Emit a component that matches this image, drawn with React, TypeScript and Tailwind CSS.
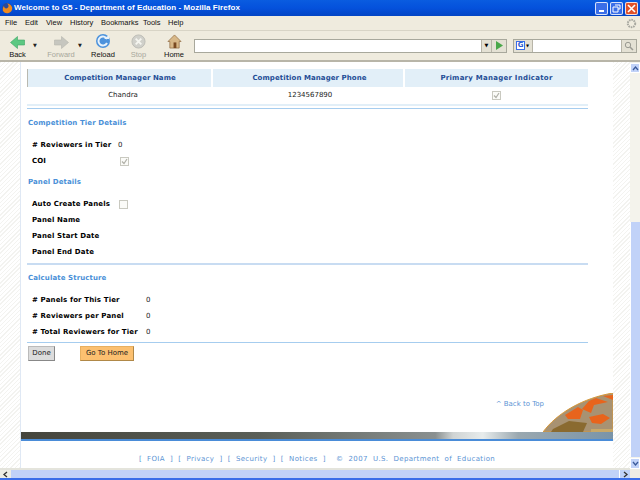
import React from "react";

const font = { fontFamily: '"DejaVu Sans", Verdana, sans-serif' };
const ui = { fontFamily: '"Liberation Sans", Arial, sans-serif' };
const hatch = "bg-[repeating-linear-gradient(135deg,#f3f3f0_0px,#f3f3f0_1px,#ffffff_1px,#ffffff_3px)]";

function ToolBtn({ label, disabled, children, w }: { label: string; disabled?: boolean; children: React.ReactNode; w: string }) {
  return (
    <div className={`flex flex-col items-center ${w}`}>
      <div className="h-[18px] flex items-center">{children}</div>
      <span className={`text-[7.5px] leading-[9px] ${disabled ? "text-[#a8a89c]" : "text-[#111]"}`} style={ui}>{label}</span>
    </div>
  );
}

function Check({ on }: { on: boolean }) {
  return (
    <span className="w-[9px] h-[9px] shrink-0 border border-[#c9c9c0] bg-[#fbfbf8] flex items-center justify-center">
      {on && (
        <svg width="7" height="7" viewBox="0 0 7 7">
          <path d="M1 3.500 L3 5.500 L6 1" stroke="#b0b0a8" strokeWidth="1.200" fill="none" />
        </svg>
      )}
    </span>
  );
}

function Field({ label, value, w, cb }: { label: string; value?: string; w: string; cb?: "on" | "off" }) {
  return (
    <div className="flex items-center h-[16px]">
      <span className={`font-bold text-[7px] tracking-[0.14px] whitespace-nowrap text-black shrink-0 ${w}`}>{label}</span>
      {value && <span className="text-[7px] text-[#222]">{value}</span>}
      {cb && <Check on={cb === "on"} />}
    </div>
  );
}

function Heading({ children, mt }: { children: React.ReactNode; mt: string }) {
  return <div className={`h-[14px] ml-[1px] flex items-center font-bold text-[7px] tracking-[0.1px] text-[#4a90d8] ${mt}`}>{children}</div>;
}

export default function App() {
  return (
    <div className="w-[640px] h-[480px] flex flex-col overflow-hidden bg-white" style={font}>
      {/* title bar */}
      <div className="h-[16px] shrink-0 flex items-center bg-gradient-to-b from-[#0a5ce0] via-[#0551dc] to-[#0344c4] pl-[1px] pr-[2px]">
        <svg width="12" height="12" viewBox="0 0 12 12" className="shrink-0">
          <circle cx="6" cy="6" r="5" fill="#2a4a9a" />
          <path d="M2 9 A5 5 0 0 0 11 5 C10 3 8 1.500 6 1.500 C8 3 8 5 6.500 6 C5 7 3 6 3 4 C2 5 1.500 7 2 9Z" fill="#ee8a1e" />
        </svg>
        <span className="ml-[1px] text-white font-bold text-[8px] tracking-[0.06px] whitespace-nowrap" style={ui}>Welcome to G5 - Department of Education - Mozilla Firefox</span>
        <div className="ml-auto flex gap-[2px]">
          <div className="w-[13px] h-[13px] rounded-[2px] border border-white/80 bg-[#3a6ee8] flex items-end justify-center pb-[2px]">
            <div className="w-[5px] h-[2px] bg-white" />
          </div>
          <div className="w-[13px] h-[13px] rounded-[2px] border border-white/80 bg-[#3a6ee8] flex items-center justify-center">
            <svg width="9" height="9" viewBox="0 0 9 9">
              <path d="M3 1h5v4H6M1 3h5v5H1z" stroke="#fff" fill="none" />
            </svg>
          </div>
          <div className="w-[13px] h-[13px] rounded-[2px] border border-white/80 bg-[#e0512a] flex items-center justify-center">
            <svg width="9" height="9" viewBox="0 0 9 9">
              <path d="M1 1l7 7M8 1l-7 7" stroke="#fff" strokeWidth="1.600" />
            </svg>
          </div>
        </div>
      </div>
      {/* menu bar */}
      <div className="h-[15px] shrink-0 flex items-center bg-[#efebde] border-b border-[#d8d4c6] pl-[5px] text-[7.5px] text-[#111]" style={ui}>
        <span className="w-[20px]">File</span>
        <span className="w-[21px]">Edit</span>
        <span className="w-[24px]">View</span>
        <span className="w-[31px]">History</span>
        <span className="w-[42px]">Bookmarks</span>
        <span className="w-[25px]">Tools</span>
        <span>Help</span>
        <svg width="11" height="11" viewBox="0 0 11 11" className="ml-auto mr-[3px]">
          <circle cx="5.500" cy="5.500" r="3.700" fill="none" stroke="#a8a8a0" strokeWidth="2" strokeDasharray="1.600 0.800" />
        </svg>
      </div>
      {/* toolbar */}
      <div className="h-[31px] shrink-0 flex items-center bg-[#efebde] border-b-2 border-[#b8b5a8] pl-[5px] pr-[3px]">
        <ToolBtn label="Back" w="w-[25px]">
          <svg width="15" height="13" viewBox="0 0 15 13" className="mt-[2px]"><path d="M0.500 6.500l7-6v3.500h7v5h-7v3.500z" fill="#5cc882" stroke="#3da565" strokeWidth="0.600" /></svg>
        </ToolBtn>
        <span className="text-[5px] w-[17px] text-[#222] pl-[3px]">▼</span>
        <ToolBtn label="Forward" disabled w="w-[28px]">
          <svg width="15" height="13" viewBox="0 0 15 13" className="mt-[2px]"><path d="M14.500 6.500l-7-6v3.500h-7v5h7v3.500z" fill="#c6c6bf" stroke="#b5b5ad" strokeWidth="0.600" /></svg>
        </ToolBtn>
        <span className="text-[5px] w-[13px] text-[#222] pl-[3px]">▼</span>
        <ToolBtn label="Reload" w="w-[30px]">
          <svg width="16" height="16" viewBox="0 0 16 16"><circle cx="8" cy="8" r="7" fill="#4c92dc" /><path d="M12 6a4.500 4.500 0 1 0 0 4" fill="none" stroke="#e8f2fb" strokeWidth="2" /><path d="M9 6h5V2z" fill="#e8f2fb" /></svg>
        </ToolBtn>
        <div className="w-[7px]" />
        <ToolBtn label="Stop" disabled w="w-[27px]">
          <svg width="15" height="15" viewBox="0 0 16 16"><circle cx="8" cy="8" r="7" fill="#d0d0ca" stroke="#bcbcb5" /><path d="M5 5l6 6M11 5l-6 6" stroke="#f5f5f0" strokeWidth="2" /></svg>
        </ToolBtn>
        <div className="w-[8px]" />
        <ToolBtn label="Home" w="w-[28px]">
          <svg width="15" height="15" viewBox="0 0 16 16"><path d="M8 1L1 8h2v7h10V8h2z" fill="#d8b888" stroke="#8a6238" strokeWidth="0.700" /><rect x="7" y="9" width="3" height="6" fill="#7a4a22" /></svg>
        </ToolBtn>
        <div className="ml-[6px] flex-1 h-[14px] bg-white border border-[#a8a89c] flex items-center justify-end">
          <span className="h-full w-[10px] bg-[#e4e1d4] border-l border-[#b8b5a8] text-[5px] flex items-center justify-center">▼</span>
          <span className="h-full w-[15px] bg-[#e4e1d4] border-l border-[#b8b5a8] flex items-center justify-center">
            <svg width="9" height="9" viewBox="0 0 9 9"><path d="M1 0l7 4.500-7 4.500z" fill="#4aa84a" /></svg>
          </span>
        </div>
        <div className="ml-[6px] w-[124px] h-[14px] bg-white border border-[#a8a89c] flex items-center">
          <span className="h-full w-[19px] bg-[#e4e1d4] border-r border-[#b8b5a8] flex items-center pl-[2px] gap-[1px]">
            <span className="w-[9px] h-[9px] border border-[#3a6ee8] bg-white text-[7px] leading-[7px] font-bold text-[#2a5ad0] text-center">G</span>
            <span className="text-[4px]">▼</span>
          </span>
          <span className="ml-auto h-full w-[15px] bg-[#e4e1d4] border-l border-[#b8b5a8] flex items-center justify-center">
            <svg width="10" height="10" viewBox="0 0 10 10"><circle cx="4" cy="4" r="2.700" fill="none" stroke="#9a9a92" /><path d="M6 6l3 3" stroke="#9a9a92" strokeWidth="1.500" /></svg>
          </span>
        </div>
      </div>
      {/* page */}
      <div className="flex-1 min-h-0 flex">
        <div className="flex-1 min-w-0 flex flex-col">
          <div className="flex-1 min-h-0 flex">
            <div className={`w-[20px] shrink-0 ${hatch}`} />
            <div className="w-[593px] shrink-0 border-l border-[#dfe8f4] flex flex-col text-[7px] text-[#222]">
              <div className="pt-[7px] pl-[6px] pr-[25px]">
                <div className="flex h-[18px] bg-[#e2eff8] font-bold text-[7px] text-[#1f4d96] items-center border-l border-[#b9b9b0]">
                  <div className="w-[185px] text-center border-r-2 border-white leading-[18px] tracking-[0.05px] pl-[1px]">Competition Manager Name</div>
                  <div className="w-[192px] text-center border-r-2 border-white leading-[18px] tracking-[0.07px] pl-[3px]">Competition Manager Phone</div>
                  <div className="flex-1 text-center tracking-[0.25px]">Primary Manager Indicator</div>
                </div>
                <div className="flex h-[17px] items-center">
                  <div className="w-[186px] text-center pl-[6px]">Chandra</div>
                  <div className="w-[192px] text-center pl-[2px]">1234567890</div>
                  <div className="flex-1 flex justify-center"><Check on /></div>
                </div>
                <div className="h-[2px] bg-[#e2eff8]" />
                <div className="h-[1px] mt-[2px] bg-[#a6cdef]" />
                <Heading mt="mt-[7px]">Competition Tier Details</Heading>
                <div className="pl-[5px] mt-[7px]">
                  <Field label="# Reviewers in Tier" value="0" w="w-[86px]" />
                  <Field label="COI" cb="on" w="w-[88px]" />
                </div>
                <Heading mt="mt-[6px]">Panel Details</Heading>
                <div className="pl-[5px] mt-[7px]">
                  <Field label="Auto Create Panels" cb="off" w="w-[87px]" />
                  <Field label="Panel Name" w="w-[87px]" />
                  <Field label="Panel Start Date" w="w-[87px]" />
                  <Field label="Panel End Date" w="w-[87px]" />
                </div>
                <div className="h-[2px] mt-[3px] bg-[#c8dcf2]" />
                <Heading mt="mt-[6px]">Calculate Structure</Heading>
                <div className="pl-[5px] mt-[7px]">
                  <Field label="# Panels for This Tier" value="0" w="w-[114px]" />
                  <Field label="# Reviewers per Panel" value="0" w="w-[114px]" />
                  <Field label="# Total Reviewers for Tier" value="0" w="w-[114px]" />
                </div>
                <div className="h-[1px] mt-[2px] bg-[#a6cdef]" />
                <div className="flex mt-[3px] ml-[1px] gap-[25px]">
                  <button className="w-[27px] h-[15px] bg-[#dcdcdc] border border-[#bbb] border-b-[#888] border-r-[#888] text-[7px] text-[#222]">Done</button>
                  <button className="w-[54px] h-[15px] bg-[#fcc070] border border-[#e8b060] border-b-[#b08848] border-r-[#b08848] text-[7px] text-[#222]">Go To Home</button>
                </div>
              </div>
              <div className="flex-1 min-h-0 flex flex-col justify-end">
                <div className="relative h-[34px] flex justify-end pr-[69px] text-[7px] leading-[12px] text-[#5c94d4]">
                  <span>^ Back to Top</span>
                  <svg width="70" height="39" viewBox="0 0 70 39" className="absolute right-0 bottom-0">
                    <path d="M0 39 C14 20 40 5 70 0 V39 Z" fill="#a89272" stroke="#d89838" />
                    <path d="M22 22l13-8 5 3-3 9-12 0z M46 8l7-3 12 4-14 3-3 8-9-4z M46 24l14-3 7 4-9 6-9-1z M60 3l10-1v5z" fill="#e8641c" />
                    <path d="M10 36l16-8 18 2-4 9H8z" fill="#8a6a30" />
                    <path d="M48 36h22v3H48z" fill="#c8a868" />
                  </svg>
                </div>
                <div className="h-[9px] bg-[linear-gradient(90deg,#45453c_0%,#5a5f58_40%,#8a9090_70%,#d0d4d4_73%,#e8ecec_78%,#9aa8b0_84%,#7a94a8_100%)] border-b-[2px] border-[#4a8cd8]" />
                <div className="h-[27px] flex justify-center items-center pt-[9px] text-[7px] tracking-[0.35px] text-[#5c94d4] whitespace-pre">
                  {"[  FOIA  ]  [  Privacy  ]  [  Security  ]  [  Notices  ]    ©  2007  U.S.  Department  of  Education"}
                </div>
              </div>
            </div>
            <div className={`w-[17px] shrink-0 ${hatch}`} />
          </div>
          {/* h scrollbar */}
          <div className="h-[10px] shrink-0 flex items-stretch bg-[#eeede5] border-t-2 border-[#e4e4dc]">
            <div className="w-[10px] flex items-center justify-center">
              <svg width="7" height="7" viewBox="0 0 7 7"><path d="M5 1L2 3.500 5 6" stroke="#333" strokeWidth="1.300" fill="none" /></svg>
            </div>
            <div className="flex-1 bg-[#c1d2f8] ml-[1px]" />
            <div className="w-[11px] bg-[#c1d2f8] border-l border-white flex items-center justify-center">
              <svg width="7" height="7" viewBox="0 0 7 7"><path d="M2 1l3 2.500L2 6" stroke="#333" strokeWidth="1.300" fill="none" /></svg>
            </div>
          </div>
        </div>
        {/* v scrollbar */}
        <div className="w-[10px] shrink-0 flex flex-col bg-[#f4f3ec]">
          <div className="h-[10px] mt-[1px] bg-[#c1d2f8] border border-white flex items-center justify-center">
            <svg width="7" height="7" viewBox="0 0 7 7"><path d="M1 5l2.500-3L6 5" stroke="#3a5a9a" strokeWidth="1.300" fill="none" /></svg>
          </div>
          <div className="h-[149px]" />
          <div className="flex-1 bg-[#c1d2f8] border-l border-white" />
          <div className="h-[11px] mt-[1px] bg-[#c1d2f8] border border-white flex items-center justify-center">
            <svg width="7" height="7" viewBox="0 0 7 7"><path d="M1 2l2.500 3L6 2" stroke="#3a5a9a" strokeWidth="1.300" fill="none" /></svg>
          </div>
          <div className="h-[9px] bg-[#eeede5]" />
        </div>
      </div>
      <div className="h-[2px] shrink-0 bg-[#3a6ee8]" />
    </div>
  );
}
